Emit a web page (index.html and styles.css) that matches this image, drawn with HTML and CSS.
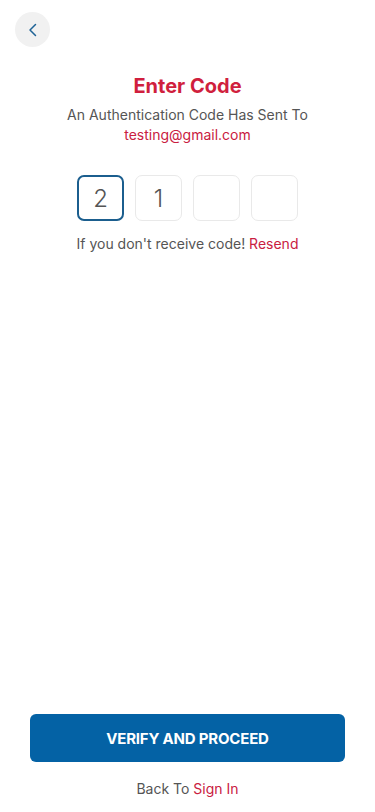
FILE: index.html
```html
<!DOCTYPE html>
<html lang="en">
<head>
    <meta charset="UTF-8">
    <meta name="viewport" content="width=device-width, initial-scale=1.0">
    <title>Enter Code</title>
    <link rel="stylesheet" href="styles.css">
</head>
<body>
    <div class="page">
        <header class="top-bar">
            <button class="back-btn" aria-label="Back">
                <svg width="16" height="16" viewBox="0 0 16 16" fill="none">
                    <path d="M10.5 2.5L5 8L10.5 13.5" stroke="#1f6396" stroke-width="1.5" stroke-linecap="round" stroke-linejoin="round"/>
                </svg>
            </button>
        </header>

        <main class="content">
            <h1>Enter Code</h1>
            <p class="subtitle">An Authentication Code Has Sent To</p>
            <p class="email">testing@gmail.com</p>

            <div class="code-row">
                <div class="code-box active">2</div>
                <div class="code-box">1</div>
                <div class="code-box"></div>
                <div class="code-box"></div>
            </div>

            <p class="resend">If you don't receive code! <a href="#">Resend</a></p>
        </main>

        <footer class="bottom">
            <button class="verify-btn">VERIFY AND PROCEED</button>
            <p class="back-link">Back To <a href="#">Sign In</a></p>
        </footer>
    </div>
</body>
</html>
```

FILE: styles.css
```css
body {
    font-family: Inter, "Open Sans", Arial, sans-serif;
    margin: 0;
    padding: 0;
    background-color: #fff;
}

.page {
    height: 812px;
    display: flex;
    flex-direction: column;
}

.top-bar {
    padding: 12px 15px 0;
}

.back-btn {
    width: 35px;
    height: 35px;
    border: none;
    border-radius: 50%;
    background-color: #f1f1f1;
    padding: 0;
    display: flex;
    align-items: center;
    justify-content: center;
}

.content {
    text-align: center;
}

h1 {
    margin: 27px 0 0;
    font-size: 20px;
    line-height: 24px;
    font-weight: 700;
    color: #d01f3e;
}

.subtitle {
    margin: 7px 0 0;
    font-size: 14px;
    line-height: 20px;
    color: #555;
}

.email {
    margin: 0;
    font-size: 14px;
    line-height: 20px;
    color: #c9203f;
}

.code-row {
    display: flex;
    justify-content: center;
    gap: 11px;
    margin-top: 30px;
}

.code-box {
    width: 47px;
    height: 46px;
    box-sizing: border-box;
    border: 1px solid #e9e9e9;
    border-radius: 7px;
    display: flex;
    align-items: center;
    justify-content: center;
    font-size: 24px;
    font-weight: 300;
    color: #555;
}

.code-box.active {
    border: 2px solid #1b5e8e;
}

.resend {
    margin: 13px 0 0;
    font-size: 14px;
    line-height: 20px;
    color: #555;
}

.resend a,
.back-link a {
    color: #c9203f;
    text-decoration: none;
}

.bottom {
    margin-top: auto;
    padding: 0 30px 13px;
    text-align: center;
}

.verify-btn {
    width: 100%;
    height: 48px;
    border: none;
    border-radius: 6px;
    background-color: #0462a5;
    color: #fff;
    font-family: inherit;
    font-size: 15px;
    font-weight: 700;
    letter-spacing: -0.2px;
}

.back-link {
    margin: 17px 0 0;
    font-size: 14px;
    line-height: 20px;
    color: #555;
}
```
